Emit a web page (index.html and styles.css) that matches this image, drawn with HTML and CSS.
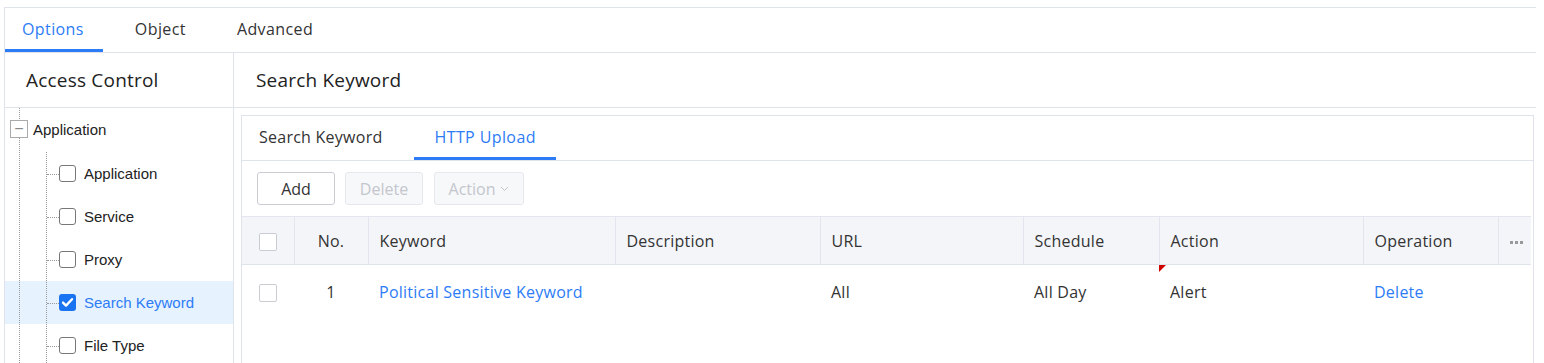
FILE: index.html
```html
<!DOCTYPE html>
<html lang="en">
<head>
    <meta charset="UTF-8">
    <meta name="viewport" content="width=device-width, initial-scale=1.0">
    <title>Access Control - Search Keyword</title>
    <link rel="stylesheet" href="styles.css">
</head>
<body>
    <div class="frame">
        <div class="top-tabs">
            <div class="top-tab active">Options</div>
            <div class="top-tab">Object</div>
            <div class="top-tab">Advanced</div>
        </div>

        <div class="layout">
            <aside class="sidebar">
                <div class="sidebar-title">Access Control</div>
                <div class="tree">
                    <div class="tree-root">
                        <span class="tree-toggle">&minus;</span>
                        <span class="tree-label">Application</span>
                    </div>
                    <div class="tree-children">
                        <div class="tree-item">
                            <span class="check"></span>
                            <span class="tree-label">Application</span>
                        </div>
                        <div class="tree-item">
                            <span class="check"></span>
                            <span class="tree-label">Service</span>
                        </div>
                        <div class="tree-item">
                            <span class="check"></span>
                            <span class="tree-label">Proxy</span>
                        </div>
                        <div class="tree-item selected">
                            <span class="check checked">
                                <svg width="17" height="17" viewBox="0 0 17 17"><path d="M4 8.6l3 3 6-6.4" fill="none" stroke="#fff" stroke-width="2.4" stroke-linecap="round" stroke-linejoin="round"/></svg>
                            </span>
                            <span class="tree-label">Search Keyword</span>
                        </div>
                        <div class="tree-item">
                            <span class="check"></span>
                            <span class="tree-label">File Type</span>
                        </div>
                    </div>
                </div>
            </aside>

            <main class="main">
                <div class="main-title">Search Keyword</div>
                <div class="content">
                    <div class="panel">
                        <div class="sub-tabs">
                            <div class="sub-tab">Search Keyword</div>
                            <div class="sub-tab active">HTTP Upload</div>
                        </div>

                        <div class="toolbar">
                            <button type="button" class="btn">Add</button>
                            <button type="button" class="btn" disabled>Delete</button>
                            <button type="button" class="btn btn-action" disabled>Action
                                <svg width="9" height="6" viewBox="0 0 9 6"><path d="M1 1l3.5 3.5L8 1" fill="none" stroke="#c3c6cd" stroke-width="1"/></svg>
                            </button>
                        </div>

                        <table class="grid">
                            <colgroup>
                                <col style="width: 52px">
                                <col style="width: 74px">
                                <col style="width: 247px">
                                <col style="width: 205px">
                                <col style="width: 203px">
                                <col style="width: 136px">
                                <col style="width: 204px">
                                <col style="width: 135px">
                                <col>
                            </colgroup>
                            <thead>
                                <tr>
                                    <th class="center"><span class="box"></span></th>
                                    <th class="center">No.</th>
                                    <th>Keyword</th>
                                    <th>Description</th>
                                    <th>URL</th>
                                    <th>Schedule</th>
                                    <th>Action</th>
                                    <th>Operation</th>
                                    <th class="center more"><span class="dots"><i></i><i></i><i></i></span></th>
                                </tr>
                            </thead>
                            <tbody>
                                <tr>
                                    <td class="center"><span class="box"></span></td>
                                    <td class="center">1</td>
                                    <td><a class="link">Political Sensitive Keyword</a></td>
                                    <td></td>
                                    <td>All</td>
                                    <td>All Day</td>
                                    <td class="dirty">Alert</td>
                                    <td><a class="link">Delete</a></td>
                                    <td></td>
                                </tr>
                            </tbody>
                        </table>
                    </div>
                </div>
            </main>
        </div>
    </div>
</body>
</html>
```

FILE: styles.css
```css
/* Basic styling */
body {
    margin: 0;
    font-family: "Open Sans", "Noto Sans", sans-serif;
    color: #333;
    background: #fff;
}

.frame {
    margin: 7px 0 0 4px;
    width: 1531px;
    height: 356px;
    border-top: 1px solid #dfe3ec;
    border-left: 1px solid #dfe3ec;
    display: flex;
    flex-direction: column;
    overflow: hidden;
}

/* Top tabs */
.top-tabs {
    display: flex;
    height: 44px;
    border-bottom: 1px solid #dfe3ec;
}

.top-tab {
    padding: 0 19px;
    margin-right: 13px;
    font-size: 16px;
    letter-spacing: 0.4px;
    line-height: 43px;
    color: #333;
    border-bottom: 3px solid transparent;
}

.top-tab:first-child {
    padding-left: 17px;
}

.top-tab.active {
    color: #2d7cf6;
    border-bottom-color: #2d7cf6;
}

.layout {
    flex: 1;
    display: flex;
}

/* Sidebar */
.sidebar {
    width: 228px;
    border-right: 1px solid #dfe3ec;
    display: flex;
    flex-direction: column;
}

.sidebar-title {
    height: 54px;
    line-height: 54px;
    padding-left: 21px;
    font-size: 19px;
    letter-spacing: 0.2px;
    color: #222;
    border-bottom: 1px solid #dfe3ec;
}

.tree {
    position: relative;
    flex: 1;
    padding-top: 1px;
    font-family: "Liberation Sans", Arial, sans-serif;
    font-size: 15px;
}

.tree::before {
    content: "";
    position: absolute;
    left: 14px;
    top: 0;
    bottom: 0;
    border-left: 1px dotted #999;
    z-index: 1;
}

.tree-root {
    height: 40px;
    display: flex;
    align-items: center;
    padding-left: 5px;
}

.tree-toggle {
    position: relative;
    z-index: 2;
    width: 16px;
    height: 16px;
    border: 1px solid #aaa;
    background: #fff;
    color: #888;
    font-size: 16px;
    line-height: 15px;
    text-align: center;
}

.tree-root .tree-label {
    margin-left: 5px;
}

.tree-children {
    position: relative;
    margin-top: 3px;
}

.tree-children::before {
    content: "";
    position: absolute;
    left: 41px;
    top: 0;
    bottom: 0;
    border-left: 1px dotted #999;
    z-index: 1;
}

.tree-item {
    position: relative;
    height: 43px;
    display: flex;
    align-items: center;
    padding-left: 54px;
}

.tree-item::before {
    content: "";
    position: absolute;
    left: 42px;
    top: 50%;
    width: 12px;
    border-top: 1px dotted #999;
}

.tree-item.selected {
    background: #e6f2fe;
}

.tree-item.selected .tree-label {
    color: #2d7cf6;
}

.check {
    width: 15px;
    height: 15px;
    border: 1px solid #777;
    border-radius: 3px;
    background: #fff;
    display: flex;
}

.check.checked {
    width: 17px;
    height: 17px;
    border: none;
    background: #1a73f0;
}

.tree-label {
    margin-left: 8px;
    color: #222;
}

/* Main area */
.main {
    flex: 1;
    display: flex;
    flex-direction: column;
}

.main-title {
    height: 54px;
    line-height: 54px;
    padding-left: 22px;
    font-size: 19px;
    letter-spacing: 0.2px;
    color: #222;
    border-bottom: 1px solid #dfe3ec;
}

.content {
    flex: 1;
    padding: 7px 2px 0 7px;
}

.panel {
    border: 1px solid #dfe3ec;
    border-bottom: none;
    height: 100%;
}

.sub-tabs {
    display: flex;
    height: 44px;
    border-bottom: 1px solid #dfe3ec;
}

.sub-tab {
    padding: 0 20px;
    margin-right: 12px;
    font-size: 16px;
    letter-spacing: 0.25px;
    line-height: 43px;
    border-bottom: 3px solid transparent;
}

.sub-tab:first-child {
    padding-left: 17px;
}

.sub-tab.active {
    padding: 0 20px;
    letter-spacing: 0.4px;
    color: #2d7cf6;
    border-bottom-color: #2d7cf6;
}

.toolbar {
    display: flex;
    gap: 10px;
    padding: 11px 0 0 15px;
}

.btn {
    height: 33px;
    width: 78px;
    padding: 0;
    font-family: inherit;
    font-size: 16px;
    color: #333;
    background: #fff;
    border: 1px solid #c9ccd3;
    border-radius: 3px;
}

.btn:disabled {
    color: #c3c6cd;
    background: #f7f8fa;
    border-color: #e6e8ed;
}

.btn-action {
    width: 90px;
    margin-left: 1px;
    display: flex;
    align-items: center;
    justify-content: center;
    gap: 5px;
}

/* Table */
.grid {
    width: 1289px;
    margin-top: 11px;
    border-collapse: collapse;
    table-layout: fixed;
    font-size: 16px;
    letter-spacing: 0.25px;
}

.grid th {
    height: 47px;
    background: #f4f5f9;
    font-weight: normal;
    text-align: left;
    padding: 0 11px;
    color: #333;
    border-top: 1px solid #e3e6ee;
    border-bottom: 1px solid #dfe3ec;
    border-left: 1px solid #e3e6ee;
}

.grid th:first-child {
    border-left: none;
}

.grid td {
    height: 53px;
    padding: 0 11px;
    padding-bottom: 2px;
    color: #333;
}

.grid .center {
    text-align: center;
}

.box {
    display: inline-block;
    vertical-align: middle;
    width: 16px;
    height: 16px;
    border: 1px solid #c9ccd3;
    border-radius: 2px;
    background: #fff;
}

.link {
    color: #2d7cf6;
}

.dirty {
    position: relative;
}

.dirty::before {
    content: "";
    position: absolute;
    left: 0;
    top: 0;
    border-top: 7px solid #d00000;
    border-right: 7px solid transparent;
}

.dots {
    display: inline-flex;
    gap: 2px;
    vertical-align: middle;
}

.dots i {
    width: 3px;
    height: 3px;
    background: #999;
}
```
